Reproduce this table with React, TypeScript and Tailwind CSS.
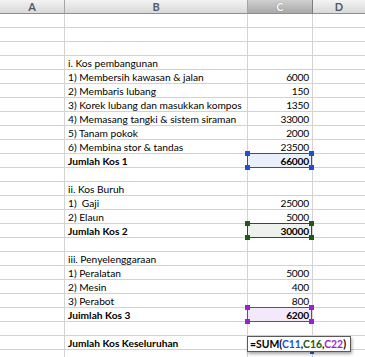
import React from 'react';

type Sel = 'blue' | 'green' | 'purple' | null;

type Row = {
  label?: string;
  value?: string;
  bold?: boolean;
  sel?: Sel;
  formula?: boolean;
};

const rows: Row[] = [
  {},
  {},
  {},
  { label: 'i. Kos pembangunan' },
  { label: '1) Membersih kawasan & jalan', value: '6000' },
  { label: '2) Membaris lubang', value: '150' },
  { label: '3) Korek lubang dan masukkan kompos', value: '1350' },
  { label: '4) Memasang tangki & sistem siraman', value: '33000' },
  { label: '5) Tanam pokok', value: '2000' },
  { label: '6) Membina stor & tandas', value: '23500' },
  { label: 'Jumlah Kos 1', value: '66000', bold: true, sel: 'blue' },
  {},
  { label: 'ii. Kos Buruh' },
  { label: '1)\u00a0 Gaji', value: '25000' },
  { label: '2) Elaun', value: '5000' },
  { label: 'Jumlah Kos 2', value: '30000', bold: true, sel: 'green' },
  {},
  { label: 'iii. Penyelenggaraan' },
  { label: '1) Peralatan', value: '5000' },
  { label: '2) Mesin', value: '400' },
  { label: '3) Perabot', value: '800' },
  { label: 'Juimlah Kos 3', value: '6200', bold: true, sel: 'purple' },
  {},
  { label: 'Jumlah Kos Keseluruhan', bold: true, formula: true },
  {},
];

const selStyles = {
  blue: { box: 'border-[#1d4fd8] bg-[#e9effb]', handle: 'bg-[#1d4fd8]' },
  green: { box: 'border-[#1f5a17] bg-[#edf2ec]', handle: 'bg-[#1f5a17]' },
  purple: { box: 'border-[#9a1fd0] bg-[#f4e9fa]', handle: 'bg-[#9a1fd0]' },
};

const Handles = ({ cls }: { cls: string }) => (
  <>
    <span className={`absolute -left-[3px] -top-[3px] w-[5px] h-[5px] ${cls}`} />
    <span className={`absolute -right-[3px] -top-[3px] w-[5px] h-[5px] ${cls}`} />
    <span className={`absolute -left-[3px] -bottom-[3px] w-[5px] h-[5px] ${cls}`} />
    <span className={`absolute -right-[3px] -bottom-[3px] w-[5px] h-[5px] ${cls}`} />
  </>
);

const HeaderCell = ({ letter, active, className }: { letter: string; active?: boolean; className: string }) => (
  <div
    className={`h-[14px] flex items-center justify-center border-b border-r border-b-[#8e8e8e] text-[11px] font-bold leading-none ${className} ${
      active
        ? 'bg-gradient-to-b from-[#d0d0d0] to-[#a9a9a9] border-r-[#7d7d7d] text-white [text-shadow:0_0_1px_#666]'
        : 'bg-gradient-to-b from-[#f3f3f3] to-[#d9d9d9] border-r-[#a6a6a6] text-[#4f5a6a]'
    }`}
  >
    {letter}
  </div>
);

export default function App() {
  return (
    <div className="w-[365px] h-[357px] overflow-hidden bg-white font-['Lato',sans-serif] text-black">
      <div className="grid grid-cols-[65px_183px_65px_52px]">
        <HeaderCell letter="A" className="" />
        <HeaderCell letter="B" className="" />
        <HeaderCell letter="C" active className="" />
        <HeaderCell letter="D" className="border-r-0" />

        {rows.map((r, i) => {
          const sel = r.sel ? selStyles[r.sel] : null;
          return (
            <React.Fragment key={i}>
              <div className="h-[14px] border-b border-r border-[#d3d3d3]" />
              <div
                className={`h-[14px] border-b border-r border-[#d3d3d3] pl-[3px] text-[10.2px] leading-[14px] whitespace-nowrap overflow-hidden ${
                  r.bold ? 'font-bold' : ''
                }`}
              >
                {r.label}
              </div>
              <div className="relative h-[14px] border-b border-r border-[#d3d3d3]">
                {sel && (
                  <div className={`absolute -left-px -top-px w-[65px] h-[15px] border-[1.5px] z-10 ${sel.box}`}>
                    <Handles cls={sel.handle} />
                  </div>
                )}
                {r.value && (
                  <div
                    className={`relative z-20 text-right pr-[3px] text-[10.2px] tracking-[-0.2px] leading-[14px] ${r.bold ? 'font-bold' : ''}`}
                  >
                    {r.value}
                  </div>
                )}
                {r.formula && (
                  <>
                    <div className="absolute left-[-1px] top-0 z-30 h-[16px] border border-[#5a5a5a] bg-white shadow-[1px_2px_3px_rgba(0,0,0,0.35)] pl-[2px] pr-[4px] text-[10.4px] leading-[14px] font-bold whitespace-nowrap">
                      =SUM(<span className="text-[#1d4fd8]">C11</span>,<span className="text-[#1f5a17]">C16</span>,
                      <span className="text-[#9a1fd0]">C22</span>)
                    </div>
                    <span className="absolute left-[62px] top-[15px] z-20 w-[4px] h-[3px] bg-[#2b5bd8]" />
                  </>
                )}
              </div>
              <div className="h-[14px] border-b border-[#d3d3d3]" />
            </React.Fragment>
          );
        })}
      </div>
    </div>
  );
}
